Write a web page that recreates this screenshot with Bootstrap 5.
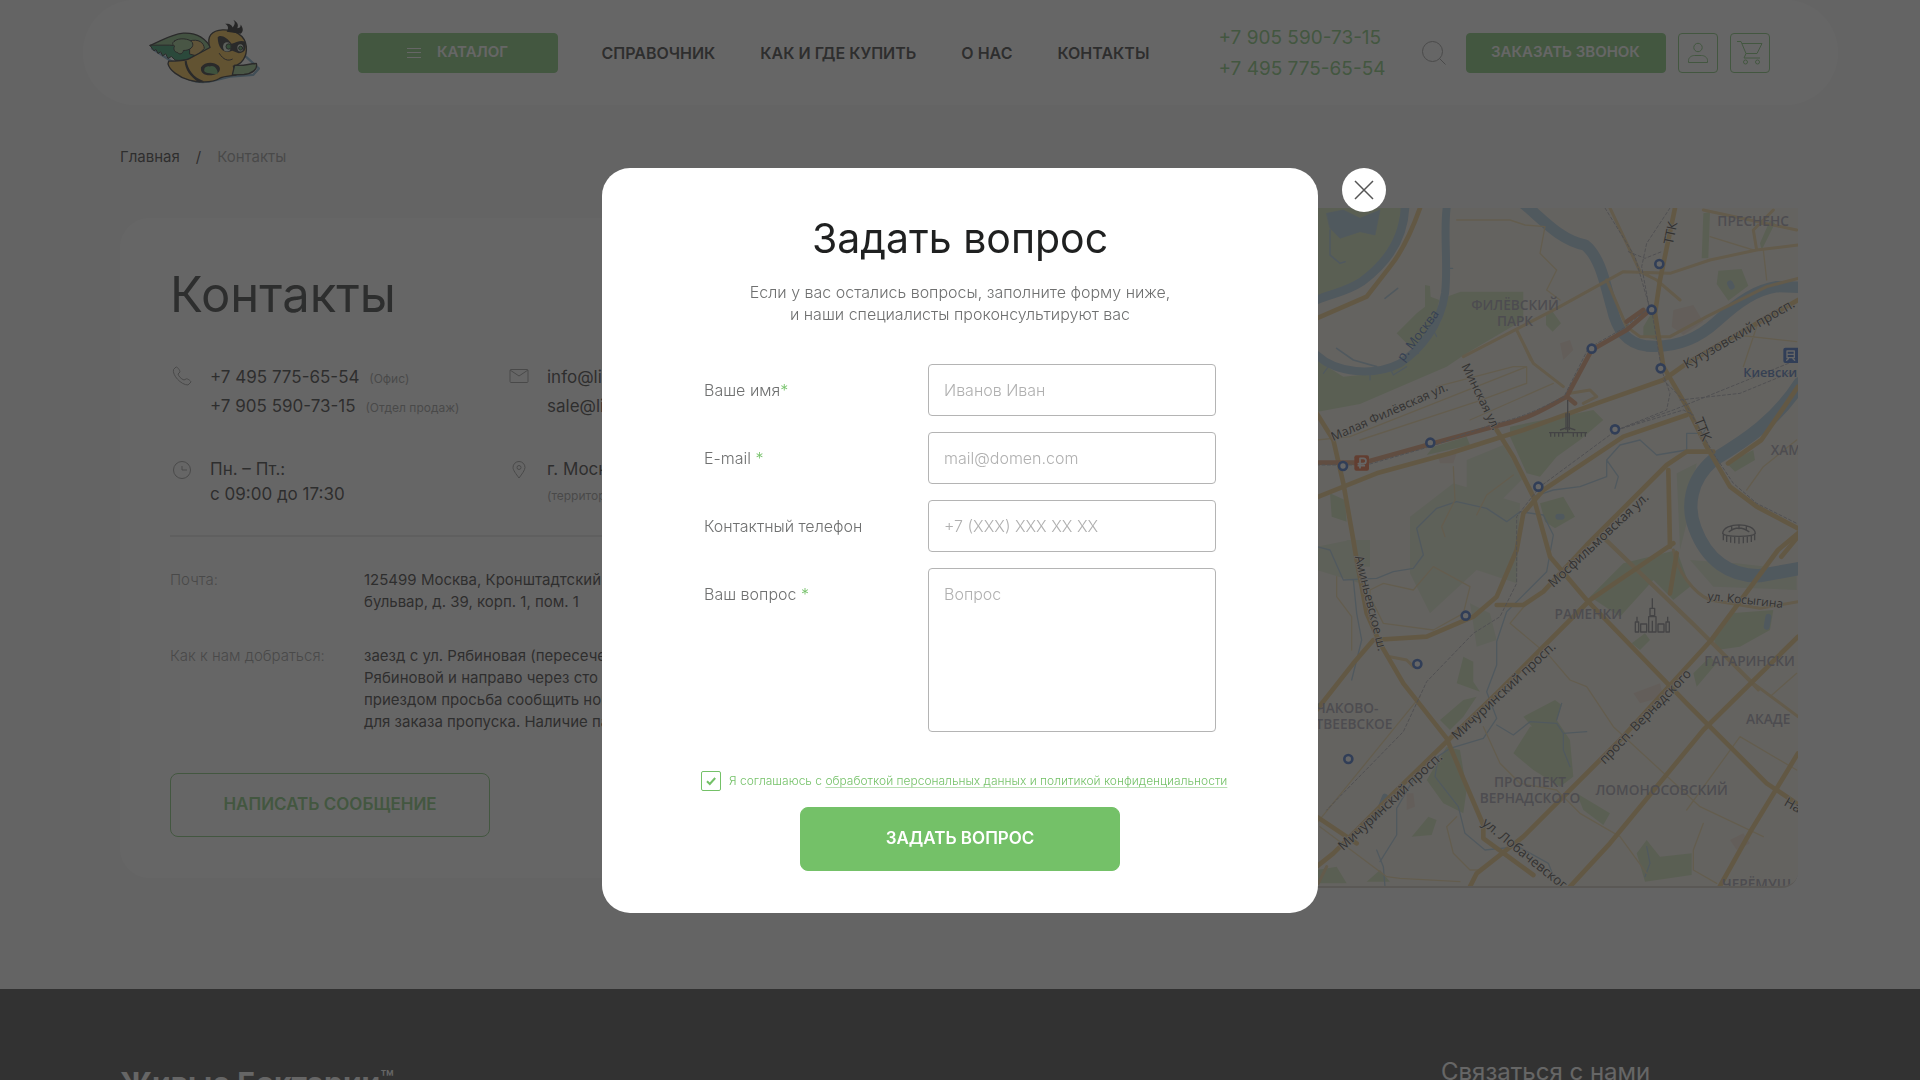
<!DOCTYPE html>
<html lang="ru">
<head>
<meta charset="utf-8">
<meta name="viewport" content="width=device-width, initial-scale=1">
<title>Контакты</title>
<link href="https://cdn.jsdelivr.net/npm/bootstrap@5.3.0/dist/css/bootstrap.min.css" rel="stylesheet">
<style>
  :root { --leaf: #74c168; --ink: #1f2020; --soft: #6f7070; }
  body { font-family: Inter, "Open Sans", sans-serif; font-size: 16px; line-height: 22px; color: var(--ink); background: #f8f8f8; overflow: hidden; }
  svg { display: block; flex: none; }
  a { color: inherit; text-decoration: none; }
  .site-head { max-width: 1755px; height: 105px; padding: 0 68px 0 65px; border-radius: 53px; background: #fff; }
  .btn { --bs-btn-font-weight: 600; --bs-btn-border-radius: 4px; padding: 0; }
  .btn-leaf, .btn-leaf:hover { background: var(--leaf); color: #fff; border-color: var(--leaf); }
  .btn-line { color: var(--leaf); border-color: var(--leaf); }
  .head-btn { width: 200px; height: 40px; font-size: 15px; }
  .head-icon { width: 40px; height: 40px; }
  .head-tools { gap: 12px; }
  .catalog-btn { margin-left: 98px; gap: 16px; }
  .head-nav { margin-left: 44px; gap: 45px; font-weight: 600; }
  .head-phones { font-size: 19px; line-height: 31px; color: var(--leaf); margin-right: 24px; }
  .head-search { margin-right: 8px; }
  .big-btn { width: 320px; height: 64px; font-size: 17px; --bs-btn-border-radius: 8px; }
  .wrap { max-width: 1680px; }
  .crumbs { padding-top: 40px; font-size: 15px; line-height: 24px; gap: 16px; }
  .crumbs .here { color: #8d8d8d; }
  .place { margin-top: 39px; margin-bottom: 101px; }
  .info-card { width: 840px; height: 660px; padding: 50px; border-radius: 30px; background: #fff; }
  .info-card h1 { font-size: 49px; line-height: 54px; font-weight: 400; margin: 0; }
  .facts { margin-top: 41px; font-size: 17px; line-height: 25px; row-gap: 36px; }
  .fact { width: 337px; padding-left: 2px; gap: 18px; }
  .fact .hint { font-size: 12px; line-height: 12px; color: #8d8d8d; margin-left: 5px; }
  .fact .tall { line-height: 29px; }
  .facts svg { margin-top: 3px; }
  .rule { height: 2px; background: #e3e3e3; margin: 28px 0 32px; }
  .detail { margin-bottom: 32px; font-size: 15px; }
  .detail dt { width: 194px; font-weight: 300; color: #8d8d8d; flex: none; }
  .detail dd { margin: 0; white-space: nowrap; }
  .map-box { height: 680px; margin-right: 2px; border-radius: 0 0 16px 0; overflow: hidden; border-bottom: 2px solid #cfc8bd; }
  .map-box svg { width: 100%; height: 100%; }
  .map-box text { font-family: "Open Sans", sans-serif; }
  .site-foot { background: #333; height: 300px; color: #fff; }
  .foot-brand { font-size: 30px; line-height: 36px; font-weight: 700; padding-top: 76px; }
  .foot-brand sup { font-size: 22px; line-height: 0; top: -8px; font-weight: 500; }
  .foot-contact { width: 359px; font-size: 24px; line-height: 30px; padding-top: 68px; }
  .modal-backdrop { --bs-backdrop-bg: #333; --bs-backdrop-opacity: .75; }
  .ask { width: 716px; max-width: 716px; margin: 168px auto 0; }
  .ask .modal-content { border: 0; border-radius: 28px; padding: 44px 102px 42px; color: var(--soft); }
  .ask h2 { font-size: 41px; line-height: 52px; font-weight: 400; color: var(--ink); margin: 0 0 17px; }
  .ask p { font-weight: 300; margin: 0 0 39px; }
  .close-round { position: absolute; left: 100%; top: 0; margin-left: 24px; width: 44px; height: 44px; border: 0; border-radius: 50%; background: #fff; padding: 11px; }
  .ask-row { margin-bottom: 16px; }
  .ask-row label { font-weight: 300; line-height: 52px; }
  .ask-row label span { color: var(--leaf); }
  .ask .form-control { width: 288px; height: 52px; border: 1px solid #b4b4b4; border-radius: 4px; padding: 14px 15px; font-size: 16px; line-height: 22px; font-weight: 300; resize: none; }
  .ask textarea.form-control { height: 164px; }
  .ask .form-control::placeholder { color: #b0b0b0; opacity: 1; }
  .agree { margin: 39px -12px 16px -3px; gap: 8px; font-size: 12px; font-weight: 300; line-height: 20px; color: var(--leaf); white-space: nowrap; }
  .agree input { appearance: none; flex: none; width: 20px; height: 20px; margin: 0; border: 1px solid var(--leaf); border-radius: 2px; background: url("data:image/svg+xml,%3Csvg xmlns='http://www.w3.org/2000/svg' viewBox='0 0 18 18'%3E%3Cpath d='M5 9.2l2.8 2.8 5.4-6' fill='none' stroke='%2374c168' stroke-width='2'/%3E%3C/svg%3E") center/18px no-repeat; }
  .agree a { text-decoration: underline; text-underline-offset: 2px; text-decoration-color: #b9dfb3; }
</style>
<script src="https://cdn.jsdelivr.net/npm/bootstrap@5.3.0/dist/js/bootstrap.bundle.min.js"></script>
</head>
<body>
<header class="site-head mx-auto d-flex align-items-center">
  <a href="#" aria-label="На главную">
    <svg width="112" height="67" viewBox="54 40 336 200" stroke-linejoin="round" stroke-linecap="round">
      <path d="M66 128L130 170 160 210Q200 240 260 222L300 212 370 207 387 188 345 150" fill="none" stroke="#6fa3c4" stroke-width="7"/>
      <path d="M60 119C95 105 120 86 160 82C195 80 225 92 245 130L220 155 165 158Z" fill="#75b06d" stroke="#111" stroke-width="4"/>
      <path d="M60 119L72 135 78 131 84 143 92 138 98 150 107 144 114 158 124 152 136 163C165 166 190 158 195 143L170 122 120 118Z" fill="#168a55" stroke="#111" stroke-width="3"/>
      <path d="M180 105C205 98 222 110 223 128L200 150 180 145Z" fill="#e7b64b" stroke="#111" stroke-width="3"/>
      <path d="M133 106C145 94 180 98 187 110C193 123 180 134 160 134C160 143 148 148 143 140C131 139 130 125 134 121C126 116 126 110 133 106Z" fill="#8bbf7c" stroke="#111" stroke-width="3"/>
      <path d="M116 166C140 166 160 166 175 160L240 125C228 92 246 73 278 72C312 71 345 87 349 122C352 153 335 176 310 181L318 208C290 211 276 212 268 218C245 232 202 230 178 223C145 214 118 192 114 174Z" fill="#f0b233" stroke="#111" stroke-width="4"/>
      <path d="M170 165C173 190 190 216 222 226L207 230C180 212 165 190 164 166Z" fill="#111"/>
      <path d="M314 178C345 182 355 173 379 173C384 190 366 204 342 206L307 207Z" fill="#8bbf7c" stroke="#111" stroke-width="4"/>
      <path d="M263 94C272 84 292 95 305 114C318 109 334 101 346 108C351 135 341 142 326 142L307 135C285 145 264 132 263 94Z" fill="#111"/>
      <ellipse cx="291" cy="123" rx="12" ry="14" fill="#d8e6d4"/><ellipse cx="331" cy="126" rx="9" ry="11" fill="#d8e6d4"/>
      <circle cx="296" cy="122" r="8" fill="#3f9a47" stroke="#111" stroke-width="3"/><circle cx="332" cy="127" r="6" fill="#3f9a47" stroke="#111" stroke-width="3"/>
      <path d="M268 143C280 162 294 167 307 160" fill="none" stroke="#111" stroke-width="3"/>
      <path d="M213 184C224 169 250 166 266 180C276 192 266 207 245 208C225 210 210 202 213 184Z" fill="#111"/>
      <path d="M238 182C254 174 265 194 263 205C242 203 218 202 223 191C223 184 235 180 238 182Z" fill="#5fae5d"/>
      <path d="M290 78C298 66 293 58 285 54C300 52 306 59 308 65C318 54 314 46 309 42C326 50 325 61 322 67C331 66 332 62 332 56C341 69 340 77 332 84Z" fill="#000"/>
    </svg>
  </a>
  <button class="btn btn-leaf head-btn catalog-btn d-flex align-items-center justify-content-center" type="button">
    <svg width="14" height="10" viewBox="0 0 14 10" stroke="#fff"><path d="M0 .5h14M0 4.5h14M0 9.5h14"/></svg>
    КАТАЛОГ
  </button>
  <nav class="head-nav d-flex">
    <a href="#">СПРАВОЧНИК</a><a href="#">КАК И ГДЕ КУПИТЬ</a><a href="#">О НАС</a><a href="#">КОНТАКТЫ</a>
  </nav>
  <div class="head-tools ms-auto d-flex align-items-center">
    <div class="head-phones d-flex flex-column"><a href="#">+7 905 590-73-15</a><a href="#">+7 495 775-65-54</a></div>
    <a class="head-search" href="#" aria-label="Поиск"><svg width="24" height="24" viewBox="0 0 24 24" fill="none" stroke="#8f8f8f"><circle cx="10.500" cy="10.500" r="10"/><path d="M17.500 17.500l6 6"/></svg></a>
    <button class="btn btn-leaf head-btn" type="button">ЗАКАЗАТЬ ЗВОНОК</button>
    <button class="btn btn-line head-icon d-flex align-items-center justify-content-center" type="button" aria-label="Профиль"><svg width="22" height="22" viewBox="0 0 22 22" fill="none" stroke="#74c168"><circle cx="11" cy="5.500" r="4.200"/><path d="M1.500 20.500v-2c0-3 3-5 6-5h7c3 0 6 2 6 5v2z"/></svg></button>
    <button class="btn btn-line head-icon d-flex align-items-center justify-content-center" type="button" aria-label="Корзина"><svg width="26" height="25" viewBox="0 0 26 25" fill="none" stroke="#74c168"><path d="M0 1.500h4l5 12h11l5-10H5M9 13.500l-2 4.500h16"/><circle cx="8.500" cy="22" r="2"/><circle cx="20.500" cy="22" r="2"/></svg></button>
  </div>
</header>

<main class="wrap mx-auto">
  <nav class="crumbs d-flex" aria-label="Навигация"><a href="#">Главная</a><span>/</span><span class="here">Контакты</span></nav>
  <div class="place d-flex align-items-center">
    <section class="info-card">
      <h1>Контакты</h1>
      <div class="facts d-flex flex-wrap">
        <div class="fact d-flex"><svg width="20" height="20" viewBox="0 0 20 20" fill="none" stroke="#8d8d8d"><path d="M4 1L1.500 3.500C0 9 9 19 16 19l3-3c0-1-4-4-5-3l-2 1C9 13 6.500 10 6 8l2-2C8 4 5 .5 4 1z"/></svg>
          <div class="tall"><div>+7 495 775-65-54 <span class="hint">(Офис)</span></div><div>+7 905 590-73-15 <span class="hint">(Отдел продаж)</span></div></div></div>
        <div class="fact d-flex"><svg width="20" height="20" viewBox="0 0 20 20" fill="none" stroke="#8d8d8d"><rect x="1" y="3.500" width="18" height="13" rx="1"/><path d="M1 4l9 6 9-6"/></svg>
          <div class="tall"><div>info@livebacteria.ru</div><div>sale@livebacteria.ru</div></div></div>
        <div class="fact d-flex"><svg width="20" height="20" viewBox="0 0 20 20" fill="none" stroke="#8d8d8d"><circle cx="10" cy="10" r="8.500"/><path d="M10 6v4h5"/></svg>
          <div>Пн. – Пт.:<br>с 09:00 до 17:30</div></div>
        <div class="fact d-flex"><svg width="20" height="20" viewBox="0 0 20 20" fill="none" stroke="#8d8d8d"><path d="M10 18C7 14 4 10 4 7.500a6 6 0 0 1 12 0C16 10 13 14 10 18z"/><circle cx="10" cy="7.500" r="2"/></svg>
          <div>г. Москва, ул. Рябиновая<br><span class="hint ms-0">(территория завода)</span></div></div>
      </div>
      <div class="rule"></div>
      <dl class="detail d-flex"><dt>Почта:</dt><dd>125499 Москва, Кронштадтский<br>бульвар, д. 39, корп. 1, пом. 1</dd></dl>
      <dl class="detail d-flex"><dt>Как к нам добраться:</dt><dd>заезд с ул. Рябиновая (пересечение с<br>Рябиновой и направо через сто метров<br>приездом просьба сообщить номер<br>для заказа пропуска. Наличие паспорта</dd></dl>
      <button class="btn btn-line big-btn mt-2" type="button">НАПИСАТЬ СООБЩЕНИЕ</button>
    </section>
    <div class="map-box flex-grow-1">
      <svg viewBox="-1050 24 2514 2040" preserveAspectRatio="xMaxYMin slice" fill="none" stroke-linecap="round" stroke-linejoin="round">
        <path fill="#f7f2e6" d="M-1050 24H1464V2064H-1050z"/>
        <g fill="#cfe3b4">
          <path d="M20 24H291C270 90 240 160 200 200C150 260 60 290 20 310z"/>
          <path d="M345 255l15 3 2 32 26 10-13 60-45 80-30 0-40-40 60-60 25-20z"/>
          <path d="M452 275H640V360L470 460 410 500 150 612 20 636V480L100 530 200 520 300 460 390 370 410 290z"/>
          <path d="M600 680L850 630 880 660 810 720 740 770 690 830 650 820 600 710z"/>
          <path d="M1225 212l70-5 20 50-60 45-35-50zM708 345l20-10 25 35-25 25-20-20zM1000 380l30-50 10 90-40-10zM370 740l100-30 10 25-130 30z"/>
          <path d="M690 910l70-20 35 60-60 35-30-20zM60 880l45 20 5 65-45-15zM840 1190l100-100 160-40 40 110-50 40-60-60-100 110z"/>
          <path d="M1210 1310l50-70 130-10-10 60-90 50-70 10zM965 1330l40-30 15 20-30 30zM1150 1420l50-50 20 20-60 70z"/>
          <path d="M610 1660l50-80 80-20 40 60 10 110-40 30-80-50zM640 1550l95-50 20 15-20 60-60 15zM440 1450l20-80 30 15 0 60 20 30zM390 1560l70-60 40-10-40 60-40 40z"/>
          <path d="M350 1740l60-100 40 10 20 120 -10 70-60-30zM305 1910l50-60 25 10-15 45zM980 1960l30-40 40 50 95-10v65l-140 20zM800 1780l100 60-20 35-60-45zM170 2045l40-35 30 35zM20 2010l60-10 30 50H20z"/>
          <path d="M1250 790l80-40 5 30-60 35zM1180 40l20-5-5 140h-20zM1350 130l30-70 15 10-40 80z"/>
        </g>
        <path fill="#dfe9cc" d="M470 780l110-45 60 100-100 100-70-60zM300 950l130-100 200 60-10 240-120-40-140 130-60-120zM1100 820l60-30-30 180-20 80zM1140 1080l70 80 250 10v-60l-180-20zM110 1020h70v80h-50zM20 1040l100-20 30 130-130-40zM480 1210l60 30 20 80-60 20z"/>
        <path fill="#f3dfcf" d="M1090 330l60-15 30 50-60 40-35-25zM750 430l30-10 10 30-30 30zM970 1480l80-30 10 40-70 20zM380 760l60 0-10 30-40 0zM1260 1920l40-20 20 30-40 20zM290 1780l20 0 5 40-25 10z"/>
        <g stroke="#a9c9de">
          <path stroke-width="26" d="M285 24C280 120 230 190 155 245C110 275 70 280 20 300"/>
          <path fill="#a9c9de" stroke-width="2" d="M50 40l50-10 50 25 60-25-15 75-45-10-60 20-30-30z"/>
          <path stroke-width="5" d="M60 90v75l30 25 15-5M80 445l50 35 70 20M225 295l38-30"/>
          <path stroke-width="24" d="M410 24C400 100 415 200 405 280C390 380 330 450 270 490C190 530 80 520 20 465"/>
          <path stroke-width="4" d="M180 520v20M40 520l15-20M240 505l10 20 40-25M310 440l15 20M370 390l10 20M418 205h10"/>
          <path stroke-width="34" d="M640 10C700 60 750 120 825 135C870 170 885 250 905 320C920 390 950 430 1010 438C1090 445 1160 420 1220 365C1290 300 1340 270 1400 260L1470 262"/>
          <path stroke-width="40" d="M1470 550C1400 660 1310 720 1210 780C1140 840 1130 920 1155 985C1190 1080 1260 1130 1350 1127L1470 1105"/>
          <path stroke-width="4" d="M20 1040l40 10 40 90 100-5 50-20 60-10 30-40-20-80 60-60 60-20 90 20 60 40 40-30 70 10 30 60-20 110-60 60-60 60-30 90 0 70-30 80 30 80-40 60-100 30-90 60-70 120 0 80-50 80"/>
          <path stroke-width="4" d="M670 890l60-20 80-10 80-30 0-50 40-45 60-15 50 45 90-15 0-50 50 0 10-20M890 780l35 50-10 35M130 1140l10 100 15 80-30 120M560 1575l50 30 50-40 80 5 20 30 70-5M760 1600l0 50 20 50M740 1560l15-50M385 1670l-10 60 70 90 20 80 60 50 100-10 90 50 20 50M1010 1940l10 50-15 40M200 1950l20 50 5 60"/>
          <path stroke-width="18" d="M225 1790l-20 50-20 20M1375 1250l-5 30M745 950l10 0M1260 250l5 10"/>
        </g>
        <path stroke="#f3d9a1" stroke-width="4" d="M440 60l160 0 45 15 60 5-15 80 50 50-30 60 40 30M150 720l350-115 150-55 0-50-40-0-230 60M480 660l250-110M620 390l40 90 100 80M20 720l100-10 530-210M430 800l5 100-40 80 10 30M610 825l-80 60-30 60M180 1170l40-20 90 20 60-70 110 60-20 80-90 50-150-20-40-80zM80 1130l0 60 45 60 0 100M600 1270l50-60M600 1270l120 100 60 70 50 20 80 120 260 240 190 90M520 1580l50 110 60 60 110 20 70 70 120 70 80 110M330 1490L20 1870M1180 1870l-30 80 0 60 70 40M1130 1830l160-220 170 100M1460 1420l-80 70M30 1880l200 150 40 5 180 10M440 1850l-30 30 20 80 50 50 30 0M1310 870l50-70 100-80M1360 150l10 90M1200 110l130 40M1340 380l-40 120M1280 405l180 20"/>
        <path stroke="#f1d192" stroke-width="9" d="M460 470L740 325 940 215 1080 220 1200 180 1340 150 1464 135M890 240l60 140 40 30 90 0 110-60 180-90 94-25M900 24l90 190M1340 150l-10-60 60-60M1180 30l280 60M620 390l50 100 90 70M1110 300l-70-60-40-20M780 580l60-10 20 20-40 20M870 1000l280 270 180 180 134 100M885 1020l270 260 190 190M1090 1050c10 60 60 130 110 150l150 25 114-20M240 1370l50 10 20 20M50 2000l-25 50"/>
        <g stroke="#efc679" stroke-width="14">
          <path d="M330 24C310 80 280 150 240 200L170 290 20 355"/>
          <path d="M20 892L200 820 420 760 640 690 860 610 1060 540 1130 490 1464 300"/>
          <path d="M20 640l50 80 30 130 30 170 10 60 30 160 40 90 70 120 130 165 50 120 60 140 0 40 150 110"/>
          <path d="M1095 24L1050 240 1035 340 1060 500 1130 620 1190 740 1260 860 1340 920 1464 985"/>
          <path d="M560 690l50 80 60 120 50 180 110 130 300 310 240 240 90 60"/>
          <path d="M1130 645L940 710 850 770 700 870 640 940 620 1050 560 1190 490 1250 350 1310 190 1320 130 1390 20 1530"/>
          <path d="M560 1215l80 0 60-40 130-140 240-240 60-40 80 0M1464 1000l-60 50-200 270L930 1620 640 1910 500 2020 480 2060"/>
          <path d="M1090 1030L840 1200 560 1480 415 1620 250 1780 70 1960 20 2000M1464 1310L1180 1590 900 1930 780 2060M1464 1660l-140 230-95 170M1464 560l-110 160-100 70M1075 810l5 230M1100 1060l-20 120M1464 1010l-50 60M20 1850l120 80"/>
        </g>
        <path stroke="#e89b6c" stroke-width="14" d="M20 788H160L370 730 550 680C650 660 700 630 770 590L845 450 950 390 1020 330M950 365l50-35M770 590l25 20"/>
        <g stroke="#a8a8b0" stroke-width="3" stroke-dasharray="9 7">
          <path d="M20 795H170L370 737 550 672C650 650 700 620 762 590L835 445 940 385 1015 325M885 24L975 170 1018 320M1080 24L1010 130 995 200 1018 325M955 155l50 20 50-20M1025 330l30 180 25 70-10 50-150 60-230 170-70 90 0 200-50 100-80 50-140 145-70 150-230 235"/>
          <path d="M1060 540l60 60 90 160 60 90 70 60 120 60M920 690l170-60 370-150M1110 600l180-20 170-70M920 690l200-60 30 15"/>
        </g>
        <g fill="#fff" stroke="#2d62c4" stroke-width="8"><circle cx="1048" cy="192" r="12"/><circle cx="1025" cy="329" r="12"/><circle cx="845" cy="446" r="12"/><circle cx="1052" cy="505" r="12"/><circle cx="915" cy="688" r="12"/><circle cx="685" cy="860" r="12"/><circle cx="361" cy="728" r="12"/><circle cx="99" cy="798" r="12"/><circle cx="467" cy="1247" r="12"/><circle cx="322" cy="1392" r="12"/><circle cx="115" cy="1677" r="12"/></g>
        <rect x="133" y="766" width="44" height="46" rx="6" fill="#f0602c"/><path d="M150 803v-28h10a8 8 0 0 1 0 16h-15M145 797h18" stroke="#fff" stroke-width="5"/>
        <rect x="1420" y="443" width="48" height="46" rx="6" fill="#2d62c4"/><path d="M1431 453h22v20h-22zM1431 463h22M1435 476l-5 5M1449 476l5 5" stroke="#fff" stroke-width="4"/>
        <g stroke="#77777c" stroke-width="4" stroke-linecap="butt">
          <path d="M773 600v100M768 640v50M778 640v50M750 690l23-8 23 8M717 698h114M722 698v12M734 698v12M746 698v12M758 698v12M790 698v12M802 698v12M814 698v12M826 698v12"/>
          <path d="M1027 1195v30M1020 1225h14v22h-14zM1016 1250h22v46h-22zM1027 1262v34M976 1266h10v30h-10zM1068 1266h10v30h-10zM981 1250v16M1073 1250v16M992 1272h18v24h-18zM1044 1272h18v24h-18z"/>
          <path d="M1238 1000c4-34 94-34 98 0c-8 12-90 12-98 0zM1256 996q30-24 62 0M1240 1003v18M1250 1008v18M1262 1010v18M1274 1011v19M1287 1012v19M1300 1011v19M1312 1010v18M1324 1008v18M1334 1003v18M1265 978v14M1287 974v14M1309 978v14"/>
        </g>
        <g fill="#9b98a8" font-size="41" font-weight="600" text-anchor="middle">
          <text x="615" y="330">ФИЛЁВСКИЙ</text><text x="615" y="378">ПАРК</text><text x="1222" y="79" text-anchor="start">ПРЕСНЕНС</text><text x="1382" y="765" text-anchor="start">ХАМ</text>
          <text x="835" y="1256">РАМЕНКИ</text><text x="1183" y="1397" text-anchor="start">ГАГАРИНСКИ</text><text x="1308" y="1571" text-anchor="start">АКАДЕ</text><text x="205" y="1538" text-anchor="end">ОЧАКОВО-</text><text x="247" y="1586" text-anchor="end">МАТВЕЕВСКОЕ</text>
          <text x="660" y="1762">ПРОСПЕКТ</text><text x="660" y="1810">ВЕРНАДСКОГО</text><text x="1055" y="1785">ЛОМОНОСОВСКИЙ</text><text x="1236" y="2066" text-anchor="start">ЧЕРЁМУШ</text>
        </g>
        <g fill="#33302e" font-size="37" stroke="#f7f2e6" stroke-width="4" paint-order="stroke">
          <text transform="translate(70 724) rotate(-24)">Малая Филёвская ул.</text><text transform="translate(454 498) rotate(64)">Минская ул.</text><text transform="translate(1130 508) rotate(-30)" font-size="40">Кутузовский просп.</text>
          <text transform="translate(1088 135) rotate(-78)" font-size="40">ТТК</text><text transform="translate(1151 660) rotate(68)" font-size="42">ТТК</text><text transform="translate(730 1164) rotate(-43)" font-size="39">Мосфильмовская ул.</text>
          <text transform="translate(134 1070) rotate(76)" font-size="37">Аминьевское ш.</text><text transform="translate(440 1622) rotate(-43)" font-size="40">Мичуринский просп.</text><text transform="translate(100 1954) rotate(-43)" font-size="40">Мичуринский просп.</text>
          <text transform="translate(884 1694) rotate(-46)" font-size="39">просп. Вернадского</text><text transform="translate(1192 1200) rotate(6)" font-size="36">ул. Косыгина</text><text transform="translate(514 1873) rotate(39)" font-size="40">ул. Лобачевског</text><text transform="translate(1420 1814) rotate(30)" font-size="40">На</text>
        </g>
        <g fill="#3e6ab5"><text font-size="38" transform="translate(280 486) rotate(-53)">р. Москва</text><text x="1300" y="531" font-size="38" font-weight="600">Киевски</text></g>
      </svg>
    </div>
  </div>
</main>

<footer class="site-foot">
  <div class="wrap mx-auto d-flex justify-content-between"><div class="foot-brand">Живые Бактерии<sup>™</sup></div><div class="foot-contact">Связаться с нами</div></div>
</footer>

<div class="modal-backdrop show"></div>
<div class="modal d-block" role="dialog" aria-modal="true" aria-labelledby="askTitle">
  <div class="modal-dialog ask">
    <form class="modal-content">
      <button class="close-round" type="button" aria-label="Закрыть"><svg width="22" height="22" viewBox="0 0 22 22" stroke="#555" stroke-width="1.500"><path d="M2 2l18 18M20 2L2 20"/></svg></button>
      <h2 id="askTitle" class="text-center">Задать вопрос</h2>
      <p class="text-center">Если у вас остались вопросы, заполните форму ниже,<br>и наши специалисты проконсультируют вас</p>
      <div class="ask-row d-flex justify-content-between"><label for="fName">Ваше имя<span>*</span></label><input id="fName" class="form-control" placeholder="Иванов Иван"></div>
      <div class="ask-row d-flex justify-content-between"><label for="fMail">E-mail <span>*</span></label><input id="fMail" type="email" class="form-control" placeholder="mail@domen.com"></div>
      <div class="ask-row d-flex justify-content-between"><label for="fTel">Контактный телефон</label><input id="fTel" type="tel" class="form-control" placeholder="+7 (XXX) XXX XX XX"></div>
      <div class="d-flex justify-content-between ask-row mb-0"><label for="fText">Ваш вопрос <span>*</span></label><textarea id="fText" class="form-control" placeholder="Вопрос"></textarea></div>
      <div class="agree d-flex"><input type="checkbox" id="fOk" checked><label for="fOk">Я соглашаюсь с <a href="#">обработкой персональных данных и политикой конфиденциальности</a></label></div>
      <button class="btn btn-leaf big-btn mx-auto" type="submit">ЗАДАТЬ ВОПРОС</button>
    </form>
  </div>
</div>
</body>
</html>
